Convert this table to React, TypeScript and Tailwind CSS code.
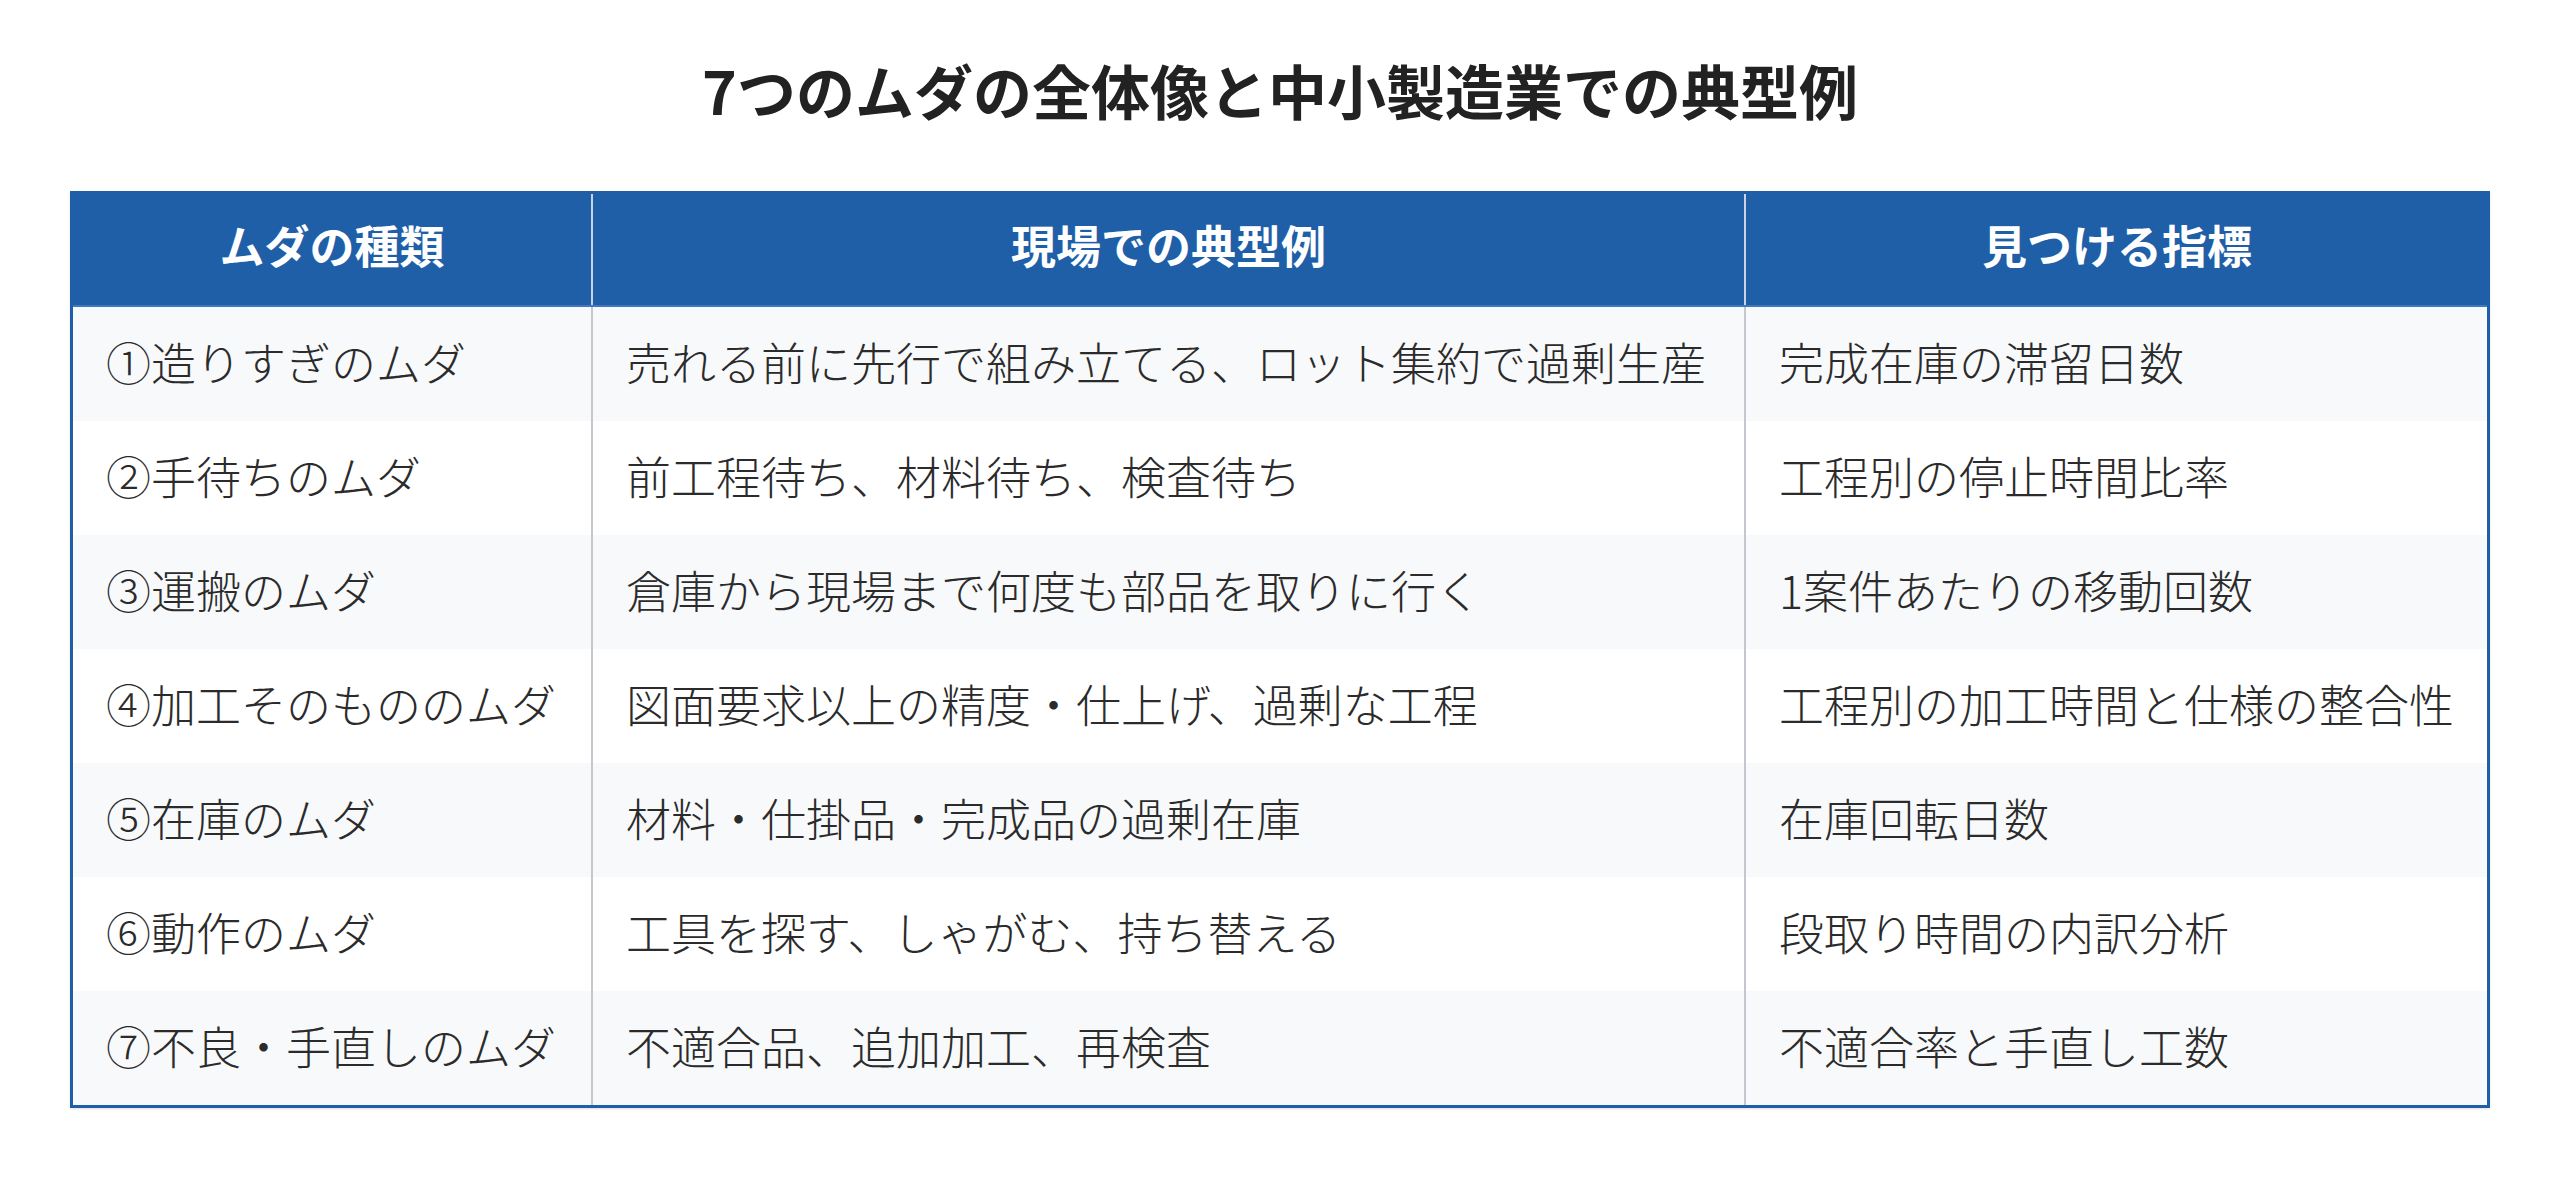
import React from "react";

// 7つのムダ table
const rows: [string, string, string][] = [
  ["①造りすぎのムダ", "売れる前に先行で組み立てる、ロット集約で過剰生産", "完成在庫の滞留日数"],
  ["②手待ちのムダ", "前工程待ち、材料待ち、検査待ち", "工程別の停止時間比率"],
  ["③運搬のムダ", "倉庫から現場まで何度も部品を取りに行く", "1案件あたりの移動回数"],
  ["④加工そのもののムダ", "図面要求以上の精度・仕上げ、過剰な工程", "工程別の加工時間と仕様の整合性"],
  ["⑤在庫のムダ", "材料・仕掛品・完成品の過剰在庫", "在庫回転日数"],
  ["⑥動作のムダ", "工具を探す、しゃがむ、持ち替える", "段取り時間の内訳分析"],
  ["⑦不良・手直しのムダ", "不適合品、追加加工、再検査", "不適合率と手直し工数"],
];

const headers = ["ムダの種類", "現場での典型例", "見つける指標"];

const font = {
  fontFamily: '"Noto Sans CJK JP", "Noto Sans", sans-serif',
};

export default function App() {
  return (
    <div className="min-h-screen bg-white px-[70px] pt-[54px]" style={font}>
      <h1 className="text-center text-[59px] font-bold leading-[72px] text-[#222]">
        7つのムダの全体像と中小製造業での典型例
      </h1>

      <div className="mt-[65px] border-[3px] border-[#1f5fa8] shadow-sm">
        {/* Header */}
        <div className="grid grid-cols-[518px_1153px_744px] bg-[#1f5fa8] border-b-2 border-[#3f78bd]">
          {headers.map((h, i) => (
            <div
              key={h}
              className={`flex h-[111px] items-center justify-center pb-[10px] text-[45px] font-bold text-white ${
                i > 0 ? "border-l-2 border-[#c9d3e2]" : ""
              }`}
            >
              {h}
            </div>
          ))}
        </div>

        {/* Body */}
        {rows.map((row, r) => (
          <div
            key={r}
            className={`grid grid-cols-[518px_1153px_744px] ${
              r % 2 === 0 ? "bg-[#f8f9fb]" : "bg-white"
            }`}
          >
            {row.map((cell, i) => (
              <div
                key={i}
                className={`flex h-[114px] items-center px-[33px] pb-[4px] text-[45px] font-light text-[#2b2b2b] whitespace-nowrap ${
                  i > 0 ? "border-l-2 border-[#c4c8ce]" : ""
                }`}
              >
                {cell}
              </div>
            ))}
          </div>
        ))}
      </div>
    </div>
  );
}
